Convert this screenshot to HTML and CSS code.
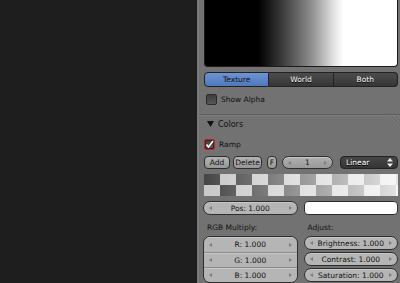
FILE: index.html
```html
<!DOCTYPE html>
<html lang="en">
<head>
  <meta charset="UTF-8">
  <meta name="viewport" content="width=device-width, initial-scale=1.0">
  <title>Texture Properties</title>
  <link rel="stylesheet" href="styles.css">
</head>
<body>
  <div class="screen">
    <div class="viewport"></div>

    <div class="properties">
      <div class="preview"></div>

      <div class="tabs">
        <button class="tab active">Texture</button>
        <button class="tab">World</button>
        <button class="tab">Both</button>
      </div>

      <label class="check-row show-alpha">
        <span class="checkbox"></span>
        Show Alpha
      </label>

      <div class="panel">
        <div class="panel-header">
          <svg class="arrow" width="7" height="6" viewBox="0 0 7 6"><polygon points="0,0 7,0 3.5,6" fill="#111"/></svg>
          Colors
          <svg class="grip" width="12" height="12" viewBox="0 0 12 12">
            <path d="M2 0 L12 10 M6 0 L12 6 M10 0 L12 2" stroke="#8a8a8a" stroke-width="1" stroke-dasharray="1 1"/>
            <path d="M3 0 L12 9 M7 0 L12 5 M11 0 L12 1" stroke="#5e5e5e" stroke-width="1" stroke-dasharray="1 1"/>
          </svg>
        </div>

        <div class="panel-body">
          <label class="check-row ramp-toggle">
            <span class="checkbox checked">
              <svg width="9" height="9" viewBox="0 0 9 9"><polyline points="1.5,4.5 3.5,7 8,1" fill="none" stroke="#fff" stroke-width="1.6"/></svg>
            </span>
            Ramp
          </label>

          <div class="ramp-tools">
            <button class="tool add">Add</button>
            <button class="tool delete">Delete</button>
            <button class="tool flip">F</button>
            <div class="num index"><span class="num-text">1</span></div>
            <div class="menu">
              Linear
              <svg width="6" height="9" viewBox="0 0 6 9"><polygon points="0,3.5 6,3.5 3,0" fill="#eee"/><polygon points="0,5.5 6,5.5 3,9" fill="#eee"/></svg>
            </div>
          </div>

          <div class="ramp"></div>

          <div class="two-col">
            <div class="num"><span class="num-text">Pos: 1.000</span></div>
            <div class="swatch"></div>
          </div>

          <div class="two-col">
            <div class="col">
              <div class="col-label">RGB Multiply:</div>
              <div class="num-stack">
                <div class="num"><span class="num-text">R: 1.000</span></div>
                <div class="num"><span class="num-text">G: 1.000</span></div>
                <div class="num"><span class="num-text">B: 1.000</span></div>
              </div>
            </div>
            <div class="col">
              <div class="col-label">Adjust:</div>
              <div class="num-list">
                <div class="num"><span class="num-text">Brightness: 1.000</span></div>
                <div class="num"><span class="num-text">Contrast: 1.000</span></div>
                <div class="num"><span class="num-text">Saturation: 1.000</span></div>
              </div>
            </div>
          </div>
        </div>
      </div>
    </div>
  </div>
</body>
</html>
```

FILE: styles.css
```css
body {
  margin: 0;
  font-family: "DejaVu Sans", sans-serif;
  font-size: 7.5px;
  color: #111;
  overflow: hidden;
}

.screen {
  display: flex;
  height: 283px;
}

.viewport {
  width: 197px;
  background: #1e1e1e;
  border-right: 2px solid #7a7a7a;
}

.properties {
  flex: 1;
  display: flex;
  flex-direction: column;
  background: #727272;
  padding: 0 2px 0 5px;
}

.preview {
  height: 66px;
  border: 1px solid #1c1c1c;
  border-top: none;
  border-radius: 0 0 4px 4px;
  background: linear-gradient(to right, #000 0%, #000 28%, #3a3a3a 40%, #8c8c8c 55%, #e8e8e8 68%, #fff 72%, #fff 100%);
}

.tabs {
  display: flex;
  margin-top: 5px;
  height: 15px;
}

.tab {
  flex: 1;
  margin: 0;
  padding: 0;
  font: inherit;
  color: #fff;
  text-shadow: 0 1px 0 #000;
  background: linear-gradient(#4c4c4c, #363636);
  border: 1px solid #222;
  border-left: none;
}

.tab:first-child {
  border-left: 1px solid #222;
  border-radius: 4px 0 0 4px;
}

.tab:last-child {
  border-radius: 0 4px 4px 0;
}

.tab.active {
  color: #111;
  text-shadow: none;
  background: linear-gradient(#6d94d3, #4f78bb);
}

.check-row {
  display: flex;
  align-items: center;
  gap: 4px;
}

.checkbox {
  display: flex;
  align-items: center;
  justify-content: center;
  width: 9px;
  height: 9px;
  background: linear-gradient(#3e3e3e, #565656);
  border: 1px solid #2b2b2b;
  border-radius: 2px;
}

.show-alpha {
  margin: 7px 0 0 2px;
  height: 10px;
}

.panel {
  margin-top: 10px;
  margin-left: -5px;
  margin-right: -2px;
}

.panel-header {
  position: relative;
  display: flex;
  align-items: center;
  gap: 4px;
  height: 18px;
  padding-left: 8px;
  font-size: 8px;
  border-top: 1px solid #5c5c5c;
  box-shadow: inset 0 1px 0 #7e7e7e;
}

.grip {
  position: absolute;
  top: 1px;
  right: 0;
}

.panel-body {
  display: flex;
  flex-direction: column;
  padding: 0 2px 0 5px;
}

.ramp-toggle {
  margin-top: 5px;
  height: 13px;
}

.checkbox.checked {
  border: 1px solid #d21c1c;
  box-shadow: inset 0 0 0 1px #2b2b2b;
}

.ramp-tools {
  display: flex;
  margin-top: 5px;
  height: 13px;
}

.tool {
  margin: 0;
  padding: 0;
  font: inherit;
  color: #111;
  background: linear-gradient(#b3b3b3, #979797);
  border: 1px solid #2e2e2e;
  border-radius: 4px;
}

.add { width: 26px; }
.delete { width: 29px; margin-left: 3px; }
.flip { width: 10px; margin-left: 5px; }

.num {
  display: flex;
  align-items: center;
  height: 14px;
  box-sizing: border-box;
  padding: 0 5px;
  background: #b5b5b5;
  border: 1px solid #2e2e2e;
  border-radius: 7px;
  box-shadow: inset 0 1px 0 #c8c8c8;
}

.num::before,
.num::after {
  content: "";
  border-top: 2.5px solid transparent;
  border-bottom: 2.5px solid transparent;
}

.num::before {
  border-right: 3px solid #7c7c7c;
}

.num::after {
  border-left: 3px solid #7c7c7c;
}

.num-text {
  flex: 1;
  text-align: center;
  white-space: nowrap;
}

.num.index {
  width: 51px;
  height: 13px;
  margin-left: 5px;
  background: linear-gradient(#b0b0b0, #999);
}

.menu {
  display: flex;
  align-items: center;
  justify-content: space-between;
  width: 58px;
  box-sizing: border-box;
  margin-left: 7px;
  padding: 0 4px 0 5px;
  color: #fff;
  text-shadow: 0 1px 0 #000;
  background: linear-gradient(#474747, #343434);
  border: 1px solid #222;
  border-radius: 4px;
}

.ramp {
  margin-top: 5px;
  height: 22px;
  background:
    linear-gradient(to right, rgba(255, 255, 255, 0), rgba(255, 255, 255, 0.45) 50%, rgba(255, 255, 255, 0.85)),
    repeating-conic-gradient(#c8c8c8 0 25%, #454545 0 50%) 0 0 / 32px 22px;
}

.two-col {
  display: grid;
  grid-template-columns: 1fr 1fr;
  gap: 6px;
  margin-left: -1px;
}

.ramp + .two-col {
  margin-top: 5px;
}

.swatch {
  height: 14px;
  box-sizing: border-box;
  background: #fff;
  border: 1px solid #2e2e2e;
  border-radius: 4px;
}

.col {
  display: flex;
  flex-direction: column;
}

.col-label {
  padding: 8px 0 0 4px;
  line-height: 10px;
  margin-bottom: 3px;
}

.num-stack {
  display: flex;
  flex-direction: column;
  border: 1px solid #2e2e2e;
  border-radius: 7px;
  overflow: hidden;
}

.num-stack .num {
  height: 15px;
  border: none;
  border-radius: 0;
  border-top: 1px solid #8a8a8a;
}

.num-stack .num:first-child {
  border-top: none;
}

.num-list {
  display: flex;
  flex-direction: column;
  gap: 2px;
}
```
